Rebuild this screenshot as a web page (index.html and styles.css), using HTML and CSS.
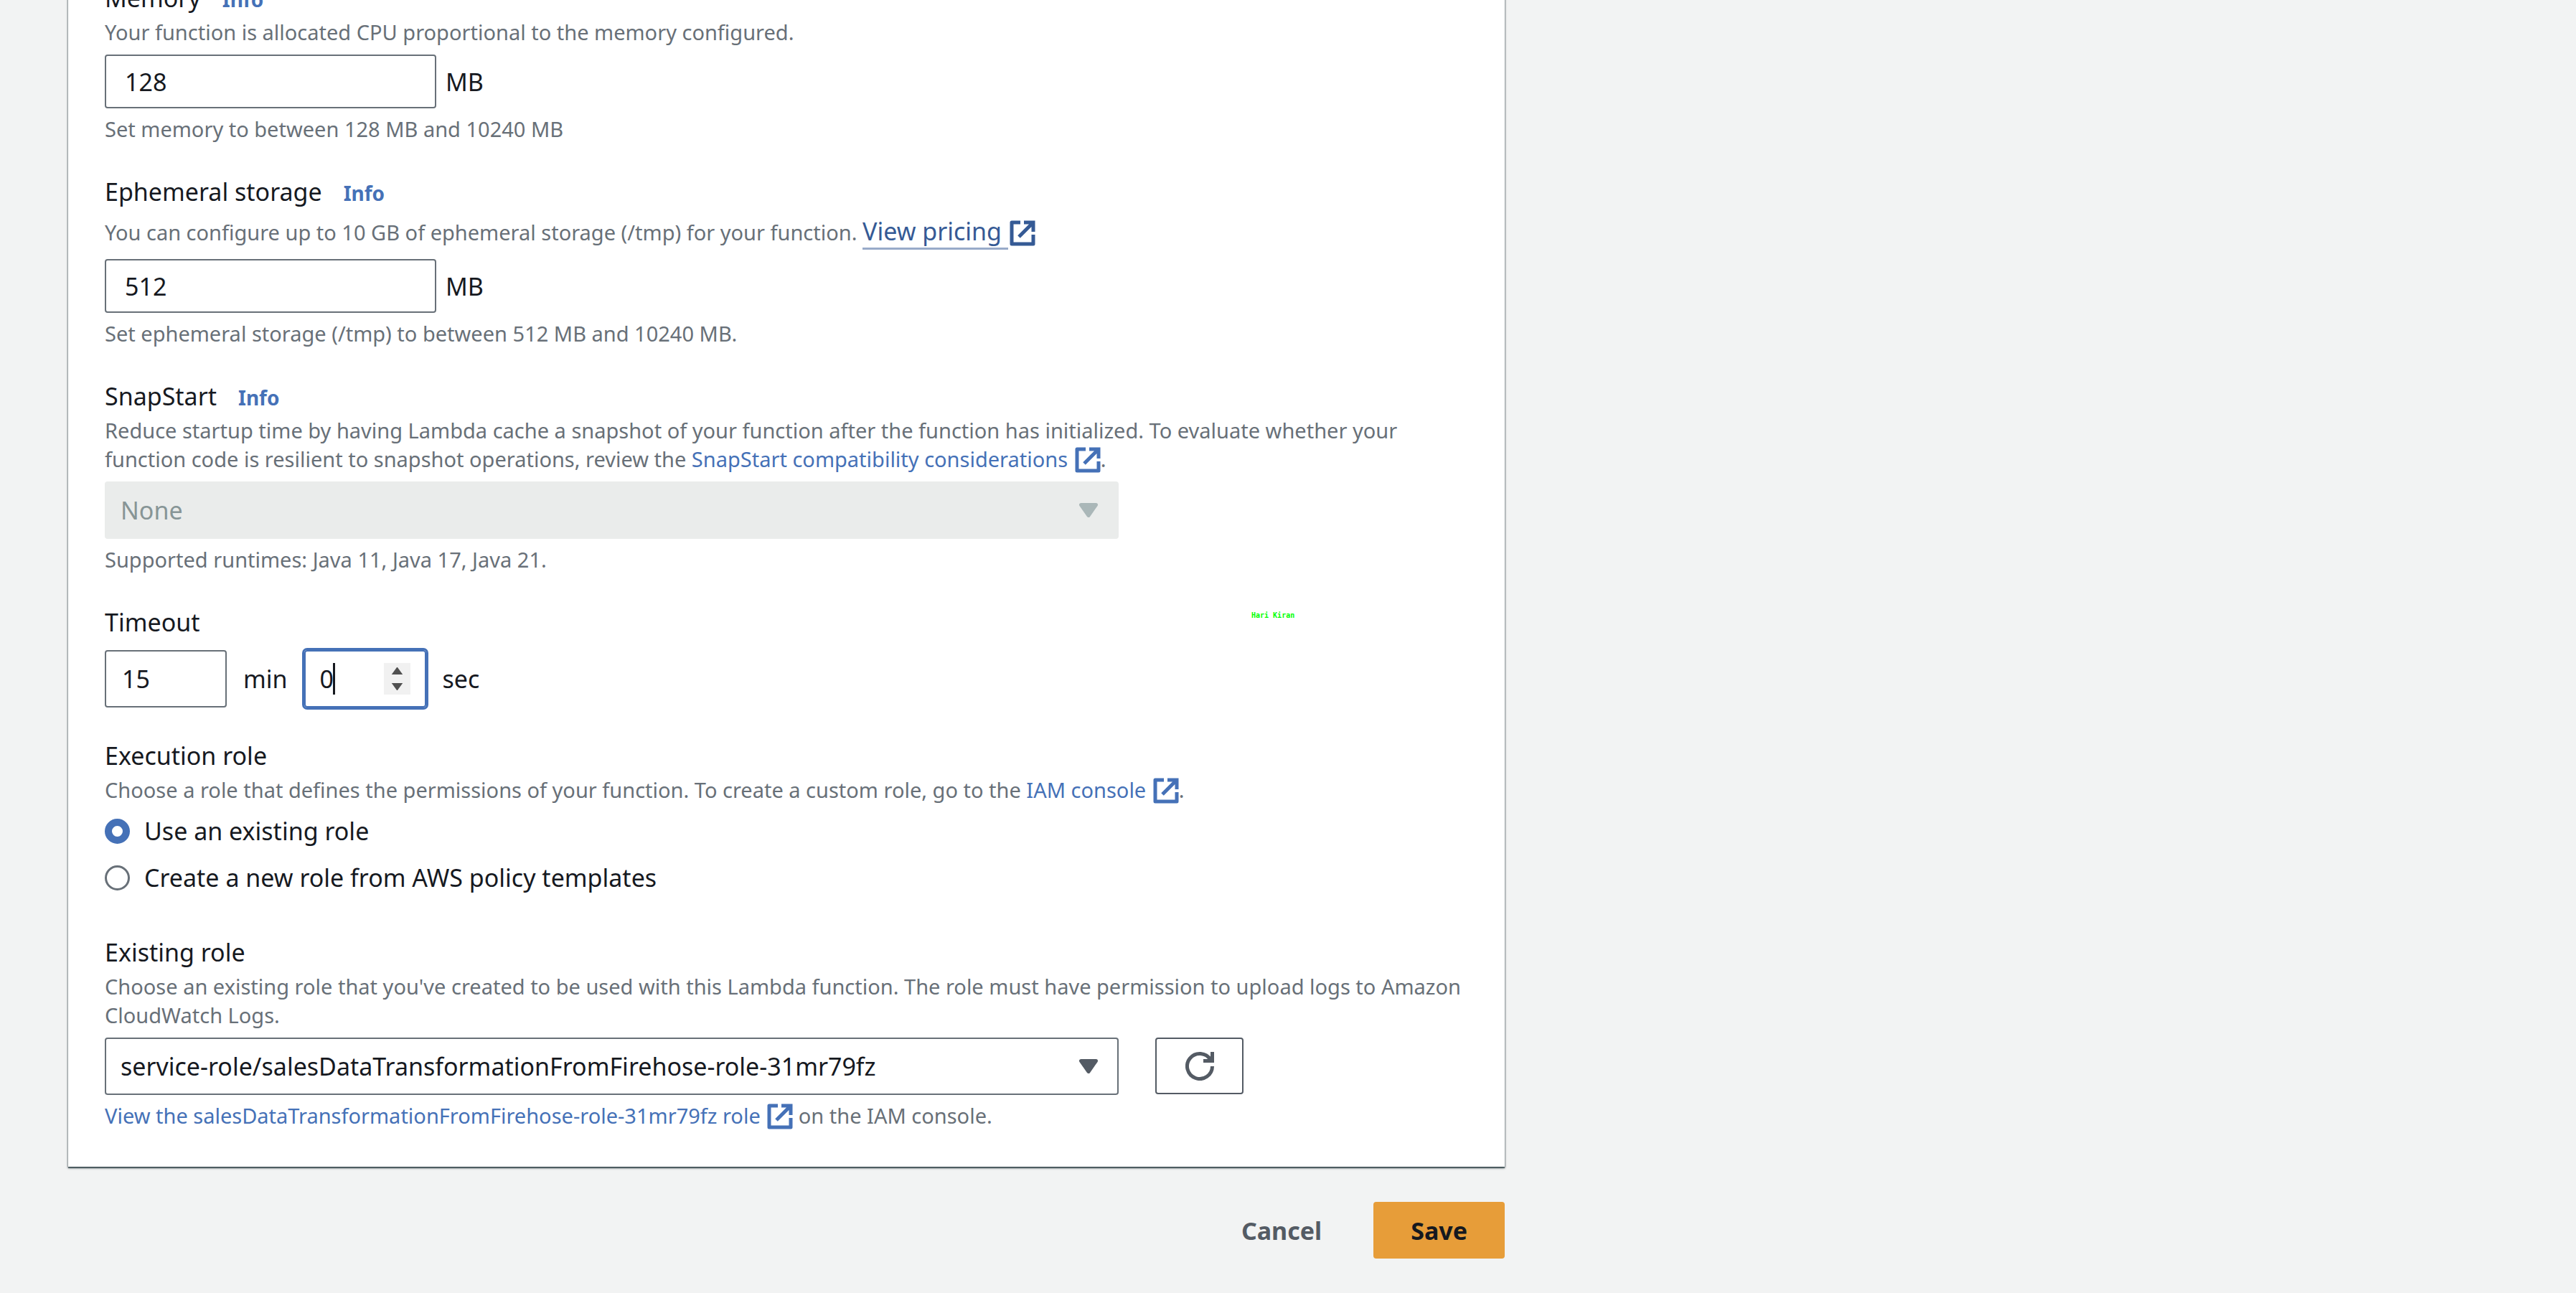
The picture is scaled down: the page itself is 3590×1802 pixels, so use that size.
FILE: index.html
```html
<!DOCTYPE html>
<html lang="en">
<head>
<meta charset="utf-8">
<title>Edit basic settings - Lambda</title>
<link rel="stylesheet" href="styles.css">
</head>
<body>
<svg class="sprite" aria-hidden="true">
  <symbol id="external" viewBox="0 0 36 36">
    <path d="M15 3H3V33H33V20" fill="none" stroke="currentColor" stroke-width="5" stroke-linejoin="round"/>
    <path d="M20 3H33V16M33 3L13 23" fill="none" stroke="currentColor" stroke-width="5"/>
  </symbol>
  <symbol id="caret-down" viewBox="0 0 26 20">
    <path d="M2.500 2.500H23.500L13 17.500Z" fill="currentColor" stroke="currentColor" stroke-width="5" stroke-linejoin="round"/>
  </symbol>
</svg>
<main class="page">
  <form class="settings">
    <section class="card">
      <div class="field">
        <div class="label-row"><label for="memory">Memory</label><a class="info" href="#memory-info">Info</a></div>
        <p class="description">Your function is allocated CPU proportional to the memory configured.</p>
        <div class="control unit-row"><input class="input input-wide" id="memory" type="text" inputmode="numeric" value="128"><span>MB</span></div>
        <p class="hint">Set memory to between 128 MB and 10240 MB</p>
      </div>
      <div class="field">
        <div class="label-row"><label for="storage">Ephemeral storage</label><a class="info" href="#storage-info">Info</a></div>
        <p class="description">You can configure up to 10 GB of ephemeral storage (/tmp) for your function. <a class="pricing" href="#pricing"><span class="pricing-text">View pricing </span><svg class="external"><use href="#external"/></svg></a></p>
        <div class="control unit-row"><input class="input input-wide" id="storage" type="text" inputmode="numeric" value="512"><span>MB</span></div>
        <p class="hint">Set ephemeral storage (/tmp) to between 512 MB and 10240 MB.</p>
      </div>
      <div class="field">
        <div class="label-row"><label for="snapstart">SnapStart</label><a class="info" href="#snapstart-info">Info</a></div>
        <p class="description">Reduce startup time by having Lambda cache a snapshot of your function after the function has initialized. To evaluate whether your function code is resilient to snapshot operations, review the <a href="#compatibility">SnapStart compatibility considerations <svg class="external"><use href="#external"/></svg></a>.</p>
        <div class="control select-wrap">
          <select class="select" id="snapstart" disabled><option>None</option></select>
          <svg class="select-arrow"><use href="#caret-down"/></svg>
        </div>
        <p class="hint">Supported runtimes: Java 11, Java 17, Java 21.</p>
      </div>
      <div class="field">
        <div class="label-row"><label for="minutes">Timeout</label></div>
        <div class="control timeout-row">
          <input class="input input-narrow" id="minutes" type="text" inputmode="numeric" value="15">
          <label for="minutes">min</label>
          <div class="stepper">
            <input class="stepper-input" id="seconds" type="text" inputmode="numeric" value="0">
            <span class="text-caret"></span>
            <div class="stepper-buttons">
              <button type="button" aria-label="Increase seconds"><svg viewBox="0 0 17 11"><path d="M0 11L8 0H9L17 11Z"/></svg></button>
              <button type="button" aria-label="Decrease seconds"><svg viewBox="0 0 17 11"><path d="M0 0H17L9 11H8Z"/></svg></button>
            </div>
          </div>
          <label for="seconds">sec</label>
        </div>
      </div>
      <fieldset class="field role-choice">
        <legend class="label-row">Execution role</legend>
        <p class="description">Choose a role that defines the permissions of your function. To create a custom role, go to the <a href="#iam">IAM console <svg class="external"><use href="#external"/></svg></a>.</p>
        <div class="control radios">
          <label class="radio"><input type="radio" name="role" checked>Use an existing role</label>
          <label class="radio"><input type="radio" name="role">Create a new role from AWS policy templates</label>
        </div>
      </fieldset>
      <div class="field">
        <div class="label-row"><label for="role">Existing role</label></div>
        <p class="description">Choose an existing role that you've created to be used with this Lambda function. The role must have permission to upload logs to Amazon CloudWatch Logs.</p>
        <div class="control role-row">
          <div class="select-wrap">
            <select class="select" id="role"><option>service-role/salesDataTransformationFromFirehose-role-31mr79fz</option></select>
            <svg class="select-arrow"><use href="#caret-down"/></svg>
          </div>
          <button class="refresh" type="button" aria-label="Refresh roles">
            <svg viewBox="0 0 40 40"><path d="M37.500 20A17.500 17.500 0 1 1 35 11" fill="none" stroke="currentColor" stroke-width="5"/><path d="M37.500 0V12.500H25" fill="none" stroke="currentColor" stroke-width="5"/></svg>
          </button>
        </div>
        <p class="hint"><a href="#view-role">View the salesDataTransformationFromFirehose-role-31mr79fz role <svg class="external"><use href="#external"/></svg></a> on the IAM console.</p>
      </div>
      <span class="watermark">Hari Kiran</span>
    </section>
    <div class="actions">
      <button class="button" type="button">Cancel</button>
      <button class="button button-primary" type="submit">Save</button>
    </div>
  </form>
</main>
</body>
</html>
```
FILE: styles.css
```css
* {
  box-sizing: border-box;
}

body {
  margin: 0;
  background: #f2f3f3;
  color: #16191f;
  font-family: "Noto Sans", "Open Sans", sans-serif;
  font-size: 34px;
  line-height: 50px;
}

p {
  margin: 0;
}

a {
  color: #4571b7;
  text-decoration: none;
}

input,
select,
button {
  font: inherit;
  color: inherit;
}

.sprite {
  display: none;
}

.page {
  padding: 0 96px 47px 95px;
  overflow: hidden;
}

/* The form is scrolled so that the first label meets the window's top edge. */
.settings {
  max-width: 2002px;
  margin-top: -28px;
}

.card {
  position: relative;
  display: flex;
  flex-direction: column;
  gap: 42px;
  padding: 0 51px 51px;
  background: #fff;
  box-shadow: 0 2px 3px 0 #00141e80, 0 0 2px 1px #00141e33, 0 2px 1px 0 #879596;
}

.field {
  min-width: 0;
  margin: 0;
  padding: 0;
  border: 0;
}

.label-row {
  display: flex;
  align-items: baseline;
  gap: 30px;
  padding: 0;
}

.info {
  font-size: 28px;
  line-height: 40px;
  font-weight: 700;
}

.description,
.hint {
  font-size: 29px;
  line-height: 40px;
  color: #687078;
}

.description {
  margin-top: 3px;
}

.hint {
  margin-top: 9px;
}

.control {
  margin-top: 11px;
}

.external {
  width: 36px;
  height: 36px;
  margin: -8px 0 -8px 2px;
  vertical-align: 0;
}

.pricing {
  color: #355a95;
  font-size: 34px;
  line-height: 55px;
}

.pricing-text {
  border-bottom: 3px solid #98abc9;
}

.unit-row {
  display: flex;
  align-items: center;
  gap: 13px;
}

.input {
  padding: 0 22px;
  border: 2px solid #687078;
  border-radius: 4px;
  background: #fff;
}

.input-wide {
  width: 462px;
  height: 75px;
  padding: 0 26px;
}

.input-narrow {
  width: 170px;
  height: 80px;
}

.select-wrap {
  display: grid;
  align-items: center;
  width: 1413px;
}

.select,
.select-arrow {
  grid-area: 1 / 1;
}

.select {
  width: 100%;
  height: 80px;
  padding: 0 60px 0 20px;
  border: 2px solid #687078;
  border-radius: 4px;
  background: #fff;
  appearance: none;
}

.select:disabled {
  border-color: #eaeceb;
  background: #eaeceb;
  color: #879596;
  opacity: 1;
}

.select-arrow {
  justify-self: end;
  width: 26px;
  height: 20px;
  margin-right: 29px;
  color: #545b64;
  pointer-events: none;
}

.select:disabled + .select-arrow {
  color: #aab7b8;
}

.timeout-row {
  display: flex;
  align-items: center;
  gap: 23px;
  margin-top: 14px;
}

.stepper {
  position: relative;
  display: flex;
  align-items: center;
  width: 170px;
  height: 80px;
  padding: 0 20px;
  border: 2px solid #4571b7;
  border-radius: 4px;
  box-shadow: 0 0 0 3px #4571b7;
}

.stepper-input {
  flex: 1;
  min-width: 0;
  padding: 0;
  border: 0;
  outline: 0;
  background: none;
}

.text-caret {
  position: absolute;
  left: 38px;
  width: 3px;
  height: 44px;
  background: #16191f;
}

.stepper-buttons {
  display: flex;
  flex-direction: column;
  width: 37px;
  height: 44px;
  background: #f1f1f1;
}

.stepper-buttons button {
  display: grid;
  flex: 1;
  place-items: center;
  padding: 0;
  border: 0;
  background: none;
}

.stepper-buttons svg {
  width: 17px;
  height: 10px;
  fill: #505050;
}

.radios {
  display: flex;
  flex-direction: column;
  gap: 15px;
  margin-top: 12px;
  padding-bottom: 12px;
}

.radio {
  display: flex;
  align-items: center;
  gap: 20px;
}

.radio input {
  width: 35px;
  height: 35px;
  margin: 0;
  border: 3px solid #687078;
  border-radius: 50%;
  background: #fff;
  appearance: none;
}

.radio input:checked {
  border: 10px solid #4571b7;
}

.role-row {
  display: flex;
  gap: 51px;
}

.refresh {
  display: grid;
  place-items: center;
  width: 123px;
  height: 79px;
  padding: 0;
  border: 2px solid #545b64;
  border-radius: 4px;
  background: #fff;
  color: #545b64;
}

.refresh svg {
  width: 40px;
  height: 40px;
}

.actions {
  display: flex;
  justify-content: flex-end;
  gap: 20px;
  margin-top: 49px;
}

.button {
  height: 79px;
  padding: 0 52px;
  border: 0;
  border-radius: 4px;
  background: none;
  color: #545b64;
  font-weight: 700;
}

.button-primary {
  background: #e79d39;
  color: #16191f;
}

.watermark {
  position: absolute;
  top: 879px;
  left: 1649px;
  color: #0f0;
  font: 700 10px/14px "DejaVu Sans Mono", monospace;
}
```
